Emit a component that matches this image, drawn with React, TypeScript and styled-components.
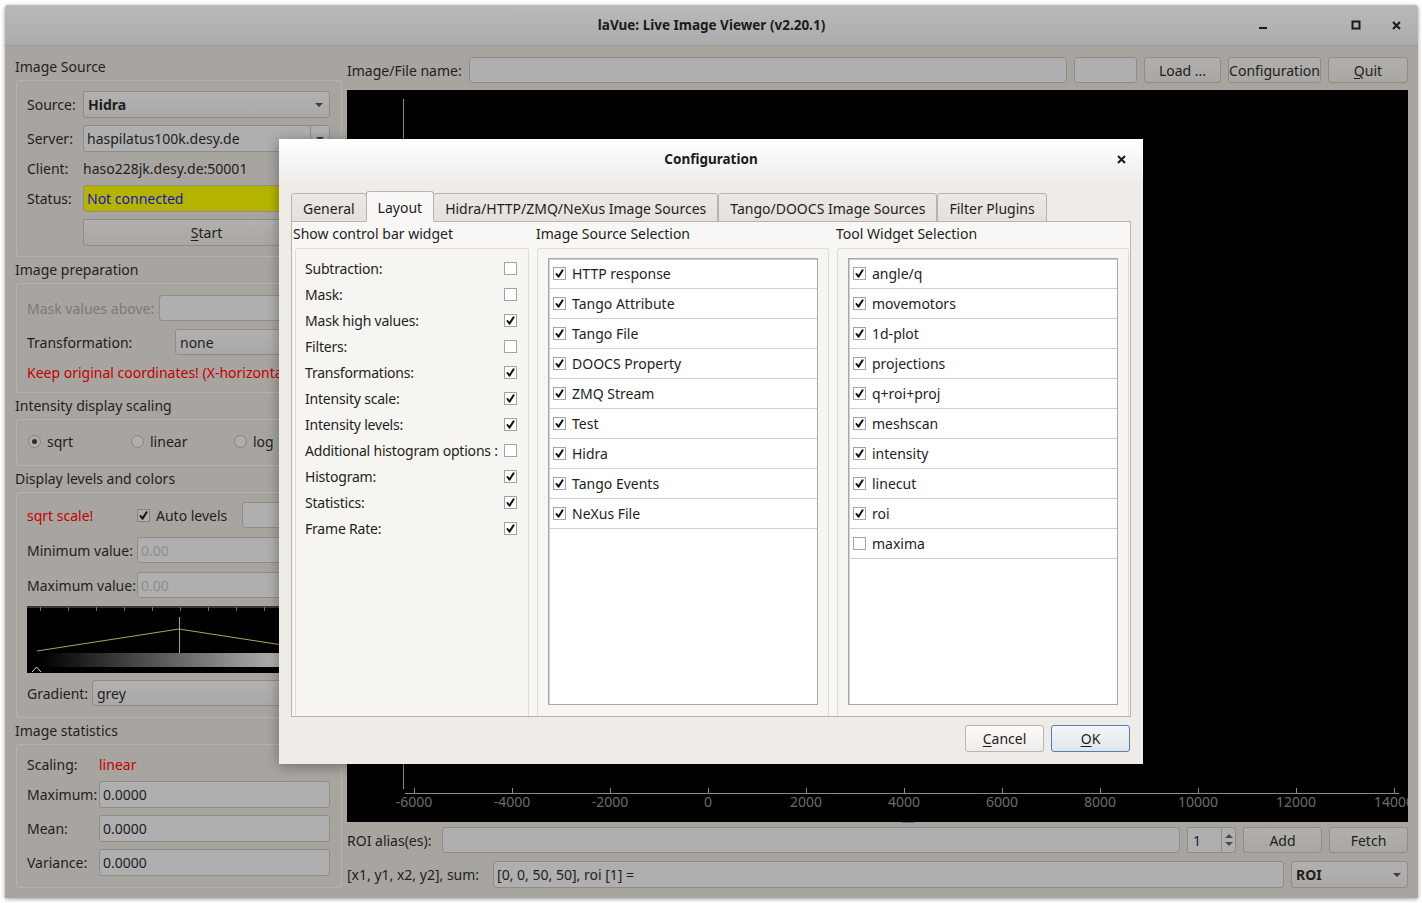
import React from "react";
import styled, { createGlobalStyle, css } from "styled-components";

const FONT = `"Noto Sans", "Open Sans", "DejaVu Sans", sans-serif`;

const GlobalStyle = createGlobalStyle`
  html, body { margin: 0; padding: 0; background: #ffffff; }
  body { font-family: ${FONT}; font-size: 14px; color: #1e1e1e; }
  *, *::before, *::after { box-sizing: border-box; }
  u { text-decoration: underline; text-underline-offset: 2px; }
`;

/* ---------- desktop & main window ---------- */

const Screen = styled.div`
  position: relative;
  width: 1422px;
  height: 903px;
  overflow: hidden;
  background: #ffffff;
  padding: 5px 0 0 5px;
`;

const MainWindow = styled.div`
  width: 1413px;
  height: 893px;
  display: flex;
  flex-direction: column;
  background: #a8a5a1;
  box-shadow: 0 1px 4px rgba(0, 0, 0, 0.4);
  border-radius: 4px 4px 0 0;
  overflow: hidden;
`;

const TitleBar = styled.header`
  flex: none;
  height: 41px;
  display: grid;
  grid-template-columns: 1fr auto 1fr;
  align-items: center;
  background: linear-gradient(#b9b9b9, #acacac);
  border-bottom: 1px solid #9a9794;
`;

const WindowTitle = styled.div`
  grid-column: 2;
  font-weight: 700;
  font-size: 13.5px;
  color: #1b1b1b;
`;

const WindowControls = styled.div`
  grid-column: 3;
  justify-self: end;
  display: flex;
  align-items: center;
  padding-right: 14px;
`;

const ControlGlyph = styled.span<{ $gap?: number }>`
  width: 16px;
  height: 16px;
  display: flex;
  align-items: center;
  justify-content: center;
  margin-left: ${(p) => p.$gap ?? 0}px;
`;

const Body = styled.div`
  flex: 1;
  display: flex;
  gap: 4px;
  padding: 8px 10px 0 10px;
  min-height: 0;
`;

/* ---------- left column ---------- */

const LeftColumn = styled.div`
  width: 328px;
  flex: none;
  display: flex;
  flex-direction: column;
`;

const SectionTitle = styled.div`
  height: 26px;
  display: flex;
  align-items: center;
  padding-bottom: 2px;
  color: #1f1f1f;
  white-space: nowrap;
`;

const GroupBox = styled.div<{ $h: number; $pt?: number; $gap?: number }>`
  height: ${(p) => p.$h}px;
  margin: 0 1px;
  border: 1px solid #b5b1ad;
  border-radius: 3px;
  padding: ${(p) => p.$pt ?? 10}px 11px 0 10px;
  display: flex;
  flex-direction: column;
  gap: ${(p) => p.$gap ?? 7}px;
  overflow: hidden;
`;

const FormRow = styled.div<{ $label: number; $h?: number; $cols?: string; $mt?: number }>`
  display: grid;
  grid-template-columns: ${(p) => p.$cols ?? `${p.$label}px 1fr`};
  align-items: center;
  height: ${(p) => p.$h ?? 27}px;
  margin-top: ${(p) => p.$mt ?? 0}px;
  flex: none;
`;

const FieldLabel = styled.span<{ $tone?: "disabled" | "red" }>`
  white-space: nowrap;
  color: ${(p) =>
    p.$tone === "disabled" ? "#7d7a77" : p.$tone === "red" ? "#c20000" : "#1e1e1e"};
`;

const fieldBase = css`
  height: 100%;
  min-width: 0;
  border: 1px solid #8f8c89;
  border-radius: 3px;
  display: flex;
  align-items: center;
  white-space: nowrap;
  overflow: hidden;
`;

const TextField = styled.div<{ $disabled?: boolean; $w?: number }>`
  ${fieldBase};
  background: #afafaf;
  padding: 0 3px;
  color: ${(p) => (p.$disabled ? "#8e8e8e" : "#1e1e1e")};
  ${(p) => (p.$w ? `width: ${p.$w}px; flex: none;` : "flex: 1;")}
`;

const StatusField = styled.div`
  ${fieldBase};
  background: #b4b400;
  padding: 0 3px;
  color: #1414c4;
`;

const ComboBox = styled.div<{ $bold?: boolean; $w?: number }>`
  ${fieldBase};
  justify-content: space-between;
  background: linear-gradient(#b3b1af, #aba9a7);
  padding: 0 6px 0 4px;
  font-weight: ${(p) => (p.$bold ? 700 : 400)};
  ${(p) => (p.$w ? `width: ${p.$w}px; flex: none;` : "")}
`;

const ComboArrow = styled.span`
  width: 0;
  height: 0;
  border-left: 4px solid transparent;
  border-right: 4px solid transparent;
  border-top: 4px solid #3e3e3e;
  flex: none;
`;

const EditCombo = styled.div`
  ${fieldBase};
  background: #afafaf;
`;

const EditText = styled.span`
  flex: 1;
  padding: 0 3px;
`;

const EditButton = styled.span`
  width: 19px;
  height: 100%;
  border-left: 1px solid #8f8c89;
  background: linear-gradient(#b3b1af, #aba9a7);
  display: flex;
  align-items: center;
  justify-content: center;
`;

const PlainValue = styled.span`
  white-space: nowrap;
`;

const DimButton = styled.div<{ $w?: number }>`
  height: 100%;
  border: 1px solid #8f8c89;
  border-radius: 3px;
  background: linear-gradient(#b2b0ad, #a9a6a3);
  display: flex;
  align-items: center;
  justify-content: center;
  white-space: nowrap;
  ${(p) => (p.$w ? `width: ${p.$w}px; flex: none;` : "")}
`;

const RedNote = styled.div`
  height: 18px;
  flex: none;
  display: flex;
  align-items: center;
  color: #c20000;
  white-space: nowrap;
`;

const RadioRow = styled.div`
  height: 27px;
  display: grid;
  grid-template-columns: 103px 103px 103px;
  align-items: center;
`;

const RadioOption = styled.label`
  display: flex;
  align-items: center;
  gap: 6px;
  white-space: nowrap;
`;

const RadioDot = styled.span<{ $on?: boolean }>`
  width: 13px;
  height: 13px;
  margin-left: 1px;
  border-radius: 50%;
  border: 1px solid #85827f;
  background: #b0aeac;
  display: inline-flex;
  align-items: center;
  justify-content: center;
  &::after {
    content: "";
    width: 5px;
    height: 5px;
    border-radius: 50%;
    background: ${(p) => (p.$on ? "#2a2a2a" : "transparent")};
  }
`;

const InlineCheck = styled.label`
  display: flex;
  align-items: center;
  gap: 6px;
  white-space: nowrap;
`;

const HistogramBox = styled.div`
  height: 67px;
  flex: none;
  margin-top: 1px;
  background: #000;
  overflow: hidden;
`;

/* ---------- right column ---------- */

const RightColumn = styled.div`
  flex: 1;
  min-width: 0;
  display: flex;
  flex-direction: column;
`;

const ToolRow = styled.div<{ $h?: number; $mt?: number }>`
  height: ${(p) => p.$h ?? 26}px;
  margin-top: ${(p) => p.$mt ?? 0}px;
  display: flex;
  align-items: center;
  gap: 7px;
  flex: none;
`;

const RowLabel = styled.span<{ $mr?: number }>`
  white-space: nowrap;
  margin-right: ${(p) => p.$mr ?? 0}px;
`;

const PlotArea = styled.div`
  margin-top: 7px;
  height: 732px;
  flex: none;
  background: #000;
  overflow: hidden;
`;

const SplitterHandle = styled.div`
  height: 5px;
  flex: none;
  display: flex;
  justify-content: center;
  align-items: flex-start;
  padding-left: 62px;
  &::before {
    content: "";
    width: 13px;
    height: 1px;
    background-image: radial-gradient(circle, #7a7775 0.6px, transparent 0.8px);
    background-size: 2px 1px;
  }
`;

const SpinBox = styled.div`
  ${fieldBase};
  width: 49px;
  flex: none;
  background: #afafaf;
  justify-content: space-between;
  padding-left: 5px;
`;

const SpinArrows = styled.span`
  width: 14px;
  height: 100%;
  border-left: 1px solid #8f8c89;
  display: flex;
  flex-direction: column;
  align-items: center;
  justify-content: center;
  gap: 4px;
`;

const SpinUp = styled.span`
  border-left: 4px solid transparent;
  border-right: 4px solid transparent;
  border-bottom: 4px solid #4a4a4a;
`;

const SpinDown = styled.span`
  border-left: 4px solid transparent;
  border-right: 4px solid transparent;
  border-top: 4px solid #4a4a4a;
`;

/* ---------- configuration dialog ---------- */

const Dialog = styled.section`
  position: absolute;
  left: 279px;
  top: 139px;
  width: 864px;
  height: 625px;
  display: flex;
  flex-direction: column;
  background: #efebe7;
  box-shadow: 0 2px 12px rgba(0, 0, 0, 0.35);
`;

const DialogTitleBar = styled.header`
  height: 42px;
  flex: none;
  display: grid;
  grid-template-columns: 1fr auto 1fr;
  align-items: center;
  padding-bottom: 2px;
  background: linear-gradient(#ffffff, #ededed);
`;

const DialogTitle = styled.div`
  grid-column: 2;
  font-weight: 700;
  font-size: 13.5px;
  color: #1b1b1b;
`;

const DialogClose = styled.span`
  grid-column: 3;
  justify-self: end;
  margin-right: 17px;
  display: flex;
`;

const DialogBody = styled.div`
  flex: 1;
  display: flex;
  flex-direction: column;
  padding: 11px 12px 12px 12px;
  min-height: 0;
`;

const TabBar = styled.div`
  height: 30px;
  flex: none;
  display: flex;
  align-items: flex-end;
  margin-bottom: -1px;
  position: relative;
  z-index: 1;
`;

const Tab = styled.div<{ $active?: boolean }>`
  height: ${(p) => (p.$active ? 31 : 29)}px;
  padding: 1px 11px 0 11px;
  display: flex;
  align-items: center;
  white-space: nowrap;
  margin-left: ${(p) => (p.$active ? -1 : 0)}px;
  margin-right: ${(p) => (p.$active ? -1 : 0)}px;
  position: relative;
  z-index: ${(p) => (p.$active ? 2 : 0)};
  border: 1px solid #b7b3af;
  border-bottom-color: ${(p) => (p.$active ? "transparent" : "#b7b3af")};
  border-radius: 3px 3px 0 0;
  background: ${(p) =>
    p.$active ? "#f9f7f5" : "linear-gradient(#ece8e4, #e4e0dc)"};
  & + & {
    border-left-width: ${(p) => (p.$active ? 1 : 0)}px;
  }
`;

const TabPane = styled.div`
  flex: 1;
  min-height: 0;
  border: 1px solid #b7b3af;
  background: #f9f7f5;
  display: grid;
  grid-template-columns: 236px 293px 293px;
  column-gap: 7px;
  padding: 0 1px;
`;

const PaneColumn = styled.div`
  display: flex;
  flex-direction: column;
  min-height: 0;
`;

const PaneColumnTitle = styled.div`
  height: 26px;
  flex: none;
  padding-top: 2px;
  line-height: 20px;
  white-space: nowrap;
`;

const PaneGroup = styled.div<{ $ml?: number }>`
  flex: 1;
  min-height: 0;
  margin-left: ${(p) => p.$ml ?? 1}px;
  border: 1px solid #dfdbd7;
  border-bottom: none;
  border-radius: 3px 3px 0 0;
  background: #f7f5f2;
  display: flex;
  flex-direction: column;
`;

const OptionList = styled.div`
  padding-top: 6px;
  display: flex;
  flex-direction: column;
`;

const OptionRow = styled.div`
  height: 26px;
  display: flex;
  align-items: center;
  justify-content: space-between;
  gap: 6px;
  padding: 0 11px 0 9px;
  white-space: nowrap;
  letter-spacing: -0.2px;
`;

const ListBox = styled.div`
  flex: 1;
  margin: 9px 10px 11px 10px;
  background: #ffffff;
  border: 1px solid #a8a8a8;
  box-shadow: inset 1px 1px 0 #cfcfcf;
  display: flex;
  flex-direction: column;
`;

const ListItem = styled.div`
  height: 30px;
  flex: none;
  display: flex;
  align-items: center;
  gap: 6px;
  padding-left: 4px;
  border-bottom: 1px solid #d0d0d0;
  white-space: nowrap;
`;

const CheckSquare = styled.span<{ $dim?: boolean }>`
  width: 13px;
  height: 13px;
  flex: none;
  border: 1px solid ${(p) => (p.$dim ? "#85827f" : "#a3a3a3")};
  background: ${(p) => (p.$dim ? "#b0aeac" : "#ffffff")};
  display: inline-flex;
  align-items: center;
  justify-content: center;
`;

const DialogButtons = styled.div`
  height: 27px;
  flex: none;
  margin-top: 8px;
  padding-right: 1px;
  display: flex;
  justify-content: flex-end;
  gap: 7px;
`;

const DialogButton = styled.div<{ $default?: boolean }>`
  width: 79px;
  height: 27px;
  border-radius: 3px;
  display: flex;
  align-items: center;
  justify-content: center;
  color: #1e1e1e;
  border: 1px solid ${(p) => (p.$default ? "#4d80b4" : "#b9b5b1")};
  background: ${(p) =>
    p.$default
      ? "linear-gradient(#f5f7f9, #dfe5ea)"
      : "linear-gradient(#fcfbfa, #eeecea)"};
`;

/* ---------- small drawings ---------- */

const CheckMark = () => (
  <svg width="9" height="9" viewBox="0 0 9 9">
    <path
      d="M1.5 5 L3.5 7.6 L7.6 1.3"
      fill="none"
      stroke="#111"
      strokeWidth="2"
      strokeLinecap="round"
      strokeLinejoin="round"
    />
  </svg>
);

const Check = ({ on, dim }: { on?: boolean; dim?: boolean }) => (
  <CheckSquare $dim={dim}>{on && <CheckMark />}</CheckSquare>
);

const CloseX = ({ size = 9 }: { size?: number }) => (
  <svg width={size} height={size} viewBox="0 0 9 9">
    <path d="M1 1 L8 8 M8 1 L1 8" stroke="#1b1b1b" strokeWidth="2" />
  </svg>
);

const MinimizeIcon = () => (
  <svg width="10" height="10" viewBox="0 0 10 10">
    <rect x="1" y="7" width="8" height="2" fill="#1b1b1b" />
  </svg>
);

const MaximizeIcon = () => (
  <svg width="10" height="10" viewBox="0 0 10 10">
    <rect x="1.5" y="1.5" width="7" height="7" fill="none" stroke="#1b1b1b" strokeWidth="2" />
  </svg>
);

const Histogram = () => {
  const ticks = Array.from({ length: 11 }, (_, i) => 13 + i * 28);
  return (
    <svg width="303" height="67" viewBox="0 0 303 67">
      <defs>
        <linearGradient id="greyGrad" x1="0" x2="1" y1="0" y2="0">
          <stop offset="0" stopColor="#000" />
          <stop offset="1" stopColor="#d0d0d0" />
        </linearGradient>
      </defs>
      <line x1="0" y1="1" x2="303" y2="1" stroke="#6f6f6f" />
      {ticks.map((x) => (
        <line key={x} x1={x + 0.5} y1="1" x2={x + 0.5} y2="5" stroke="#6f6f6f" />
      ))}
      <polyline points="10,45 152,23 294,45" fill="none" stroke="#a9a75a" strokeWidth="1" />
      <line x1="152.5" y1="11" x2="152.5" y2="47" stroke="#a9a75a" />
      <rect x="13" y="47" width="282" height="14" fill="url(#greyGrad)" />
      <path d="M5 66 L9.5 61 L14 66" fill="none" stroke="#d8d8d8" strokeWidth="1" />
    </svg>
  );
};

const PlotAxes = () => {
  const labels = [-6000, -4000, -2000, 0, 2000, 4000, 6000, 8000, 10000, 12000, 14000];
  return (
    <svg width="1061" height="732" viewBox="0 0 1061 732">
      <line x1="56.5" y1="9" x2="56.5" y2="699" stroke="#8a8a8a" />
      <line x1="58" y1="703.5" x2="1052" y2="703.5" stroke="#8a8a8a" />
      {labels.map((v, i) => {
        const x = 67 + i * 98;
        return (
          <g key={v}>
            <line x1={x + 0.5} y1="698" x2={x + 0.5} y2="703" stroke="#8a8a8a" />
            <text
              x={x}
              y="717"
              textAnchor="middle"
              fill="#6d6d6d"
              fontSize="14"
              fontFamily={FONT}
            >
              {v}
            </text>
          </g>
        );
      })}
    </svg>
  );
};

/* ---------- data ---------- */

const controlBarOptions: [string, boolean][] = [
  ["Subtraction:", false],
  ["Mask:", false],
  ["Mask high values:", true],
  ["Filters:", false],
  ["Transformations:", true],
  ["Intensity scale:", true],
  ["Intensity levels:", true],
  ["Additional histogram options :", false],
  ["Histogram:", true],
  ["Statistics:", true],
  ["Frame Rate:", true],
];

const imageSources: [string, boolean][] = [
  ["HTTP response", true],
  ["Tango Attribute", true],
  ["Tango File", true],
  ["DOOCS Property", true],
  ["ZMQ Stream", true],
  ["Test", true],
  ["Hidra", true],
  ["Tango Events", true],
  ["NeXus File", true],
];

const toolWidgets: [string, boolean][] = [
  ["angle/q", true],
  ["movemotors", true],
  ["1d-plot", true],
  ["projections", true],
  ["q+roi+proj", true],
  ["meshscan", true],
  ["intensity", true],
  ["linecut", true],
  ["roi", true],
  ["maxima", false],
];

const tabs = [
  "General",
  "Layout",
  "Hidra/HTTP/ZMQ/NeXus Image Sources",
  "Tango/DOOCS Image Sources",
  "Filter Plugins",
];

export default function App() {
  return (
    <>
      <GlobalStyle />
      <Screen>
        <MainWindow>
          <TitleBar>
            <WindowTitle>laVue: Live Image Viewer (v2.20.1)</WindowTitle>
            <WindowControls>
              <ControlGlyph>
                <MinimizeIcon />
              </ControlGlyph>
              <ControlGlyph $gap={77}>
                <MaximizeIcon />
              </ControlGlyph>
              <ControlGlyph $gap={24}>
                <CloseX />
              </ControlGlyph>
            </WindowControls>
          </TitleBar>

          <Body>
            <LeftColumn>
              <SectionTitle>Image Source</SectionTitle>
              <GroupBox $h={177} $pt={10}>
                <FormRow $label={56}>
                  <FieldLabel>Source:</FieldLabel>
                  <ComboBox $bold>
                    <span>Hidra</span>
                    <ComboArrow />
                  </ComboBox>
                </FormRow>
                <FormRow $label={56}>
                  <FieldLabel>Server:</FieldLabel>
                  <EditCombo>
                    <EditText>haspilatus100k.desy.de</EditText>
                    <EditButton>
                      <ComboArrow />
                    </EditButton>
                  </EditCombo>
                </FormRow>
                <FormRow $label={56} $h={19}>
                  <FieldLabel>Client:</FieldLabel>
                  <PlainValue>haso228jk.desy.de:50001</PlainValue>
                </FormRow>
                <FormRow $label={56}>
                  <FieldLabel>Status:</FieldLabel>
                  <StatusField>Not connected</StatusField>
                </FormRow>
                <FormRow $label={56}>
                  <span />
                  <DimButton>
                    <span>
                      <u>S</u>tart
                    </span>
                  </DimButton>
                </FormRow>
              </GroupBox>

              <SectionTitle>Image preparation</SectionTitle>
              <GroupBox $h={110} $pt={11} $gap={8}>
                <FormRow $label={132} $h={26}>
                  <FieldLabel $tone="disabled">Mask values above:</FieldLabel>
                  <TextField />
                </FormRow>
                <FormRow $label={148} $h={26}>
                  <FieldLabel>Transformation:</FieldLabel>
                  <ComboBox>
                    <span>none</span>
                    <ComboArrow />
                  </ComboBox>
                </FormRow>
                <RedNote>Keep original coordinates! (X-horizontal)</RedNote>
              </GroupBox>

              <SectionTitle>Intensity display scaling</SectionTitle>
              <GroupBox $h={47} $pt={8}>
                <RadioRow>
                  <RadioOption>
                    <RadioDot $on />
                    sqrt
                  </RadioOption>
                  <RadioOption>
                    <RadioDot />
                    linear
                  </RadioOption>
                  <RadioOption>
                    <RadioDot />
                    log
                  </RadioOption>
                </RadioRow>
              </GroupBox>

              <SectionTitle>Display levels and colors</SectionTitle>
              <GroupBox $h={226} $pt={9} $gap={7}>
                <FormRow $label={110} $h={26} $cols="110px 105px 1fr">
                  <FieldLabel $tone="red">sqrt scale!</FieldLabel>
                  <InlineCheck>
                    <Check on dim />
                    Auto levels
                  </InlineCheck>
                  <TextField />
                </FormRow>
                <FormRow $label={110} $h={26} $mt={2}>
                  <FieldLabel>Minimum value:</FieldLabel>
                  <TextField $disabled>0.00</TextField>
                </FormRow>
                <FormRow $label={110} $h={26} $mt={2}>
                  <FieldLabel>Maximum value:</FieldLabel>
                  <TextField $disabled>0.00</TextField>
                </FormRow>
                <HistogramBox>
                  <Histogram />
                </HistogramBox>
                <FormRow $label={65} $h={26}>
                  <FieldLabel>Gradient:</FieldLabel>
                  <ComboBox>
                    <span>grey</span>
                    <ComboArrow />
                  </ComboBox>
                </FormRow>
              </GroupBox>

              <SectionTitle>Image statistics</SectionTitle>
              <GroupBox $h={144} $pt={9}>
                <FormRow $label={72} $h={20}>
                  <FieldLabel>Scaling:</FieldLabel>
                  <FieldLabel $tone="red">linear</FieldLabel>
                </FormRow>
                <FormRow $label={72}>
                  <FieldLabel>Maximum:</FieldLabel>
                  <TextField>0.0000</TextField>
                </FormRow>
                <FormRow $label={72}>
                  <FieldLabel>Mean:</FieldLabel>
                  <TextField>0.0000</TextField>
                </FormRow>
                <FormRow $label={72}>
                  <FieldLabel>Variance:</FieldLabel>
                  <TextField>0.0000</TextField>
                </FormRow>
              </GroupBox>
            </LeftColumn>

            <RightColumn>
              <ToolRow $mt={3}>
                <RowLabel>Image/File name:</RowLabel>
                <TextField />
                <TextField $w={63} />
                <DimButton $w={77}>Load ...</DimButton>
                <DimButton $w={93}>Configuration</DimButton>
                <DimButton $w={80}>
                  <span>
                    <u>Q</u>uit
                  </span>
                </DimButton>
              </ToolRow>
              <PlotArea>
                <PlotAxes />
              </PlotArea>
              <SplitterHandle />
              <ToolRow>
                <RowLabel $mr={4}>ROI alias(es):</RowLabel>
                <TextField />
                <SpinBox>
                  <span>1</span>
                  <SpinArrows>
                    <SpinUp />
                    <SpinDown />
                  </SpinArrows>
                </SpinBox>
                <DimButton $w={79}>Add</DimButton>
                <DimButton $w={79}>Fetch</DimButton>
              </ToolRow>
              <ToolRow $h={27} $mt={8}>
                <RowLabel $mr={7}>[x1, y1, x2, y2], sum:</RowLabel>
                <TextField>[0, 0, 50, 50], roi [1] =</TextField>
                <ComboBox $bold $w={117}>
                  <span>ROI</span>
                  <ComboArrow />
                </ComboBox>
              </ToolRow>
            </RightColumn>
          </Body>
        </MainWindow>

        <Dialog>
          <DialogTitleBar>
            <DialogTitle>Configuration</DialogTitle>
            <DialogClose>
              <CloseX size={9} />
            </DialogClose>
          </DialogTitleBar>
          <DialogBody>
            <TabBar>
              {tabs.map((t) => (
                <Tab key={t} $active={t === "Layout"}>
                  {t}
                </Tab>
              ))}
            </TabBar>
            <TabPane>
              <PaneColumn>
                <PaneColumnTitle>Show control bar widget</PaneColumnTitle>
                <PaneGroup $ml={2}>
                  <OptionList>
                    {controlBarOptions.map(([label, on]) => (
                      <OptionRow key={label}>
                        <span>{label}</span>
                        <Check on={on} />
                      </OptionRow>
                    ))}
                  </OptionList>
                </PaneGroup>
              </PaneColumn>
              <PaneColumn>
                <PaneColumnTitle>Image Source Selection</PaneColumnTitle>
                <PaneGroup>
                  <ListBox>
                    {imageSources.map(([label, on]) => (
                      <ListItem key={label}>
                        <Check on={on} />
                        {label}
                      </ListItem>
                    ))}
                  </ListBox>
                </PaneGroup>
              </PaneColumn>
              <PaneColumn>
                <PaneColumnTitle>Tool Widget Selection</PaneColumnTitle>
                <PaneGroup>
                  <ListBox>
                    {toolWidgets.map(([label, on]) => (
                      <ListItem key={label}>
                        <Check on={on} />
                        {label}
                      </ListItem>
                    ))}
                  </ListBox>
                </PaneGroup>
              </PaneColumn>
            </TabPane>
            <DialogButtons>
              <DialogButton>
                <span>
                  <u>C</u>ancel
                </span>
              </DialogButton>
              <DialogButton $default>
                <span>
                  <u>O</u>K
                </span>
              </DialogButton>
            </DialogButtons>
          </DialogBody>
        </Dialog>
      </Screen>
    </>
  );
}
